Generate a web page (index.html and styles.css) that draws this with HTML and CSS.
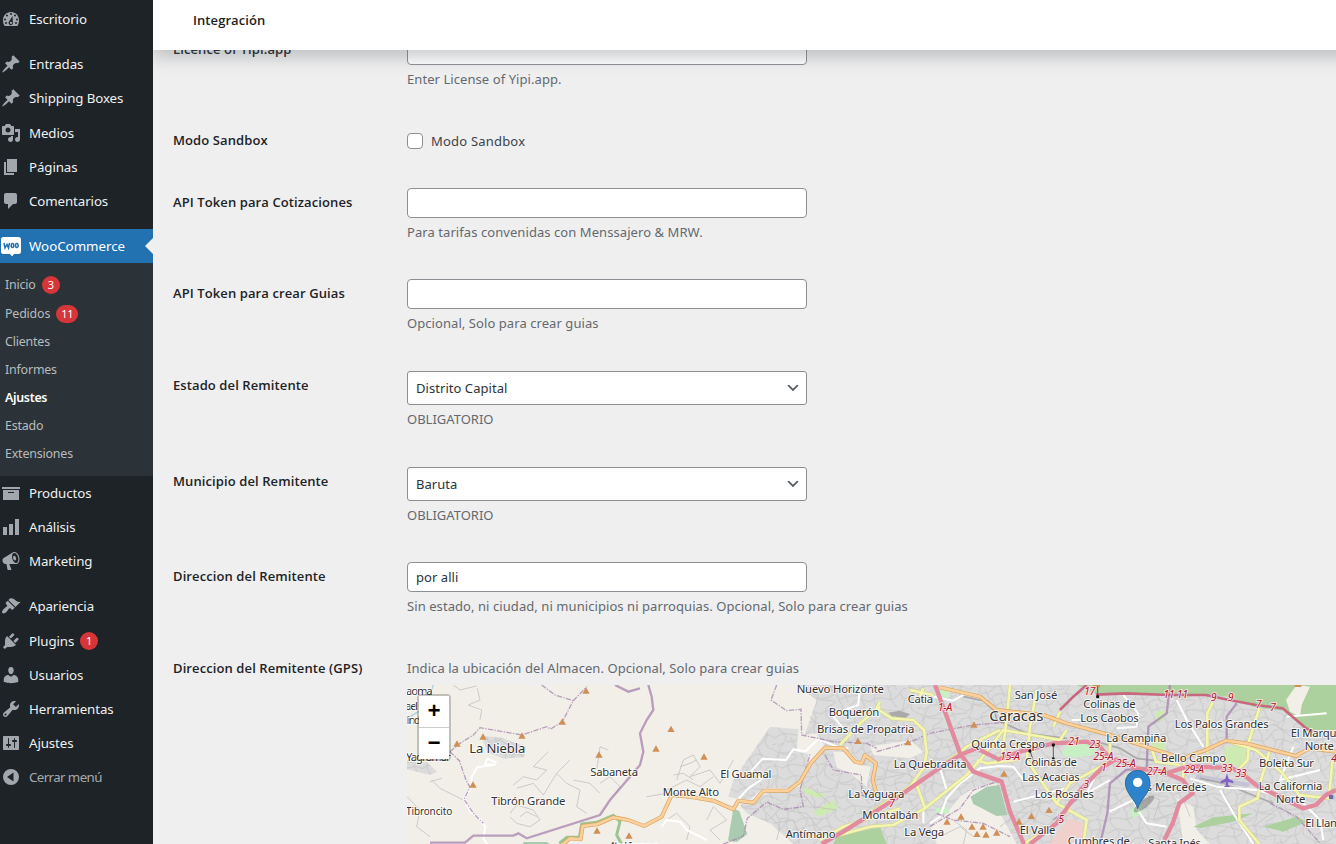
FILE: index.html
```html
<!DOCTYPE html>
<html lang="es">
<head>
<meta charset="utf-8">
<title>Ajustes de WooCommerce</title>
<link rel="stylesheet" href="styles.css">
</head>
<body>
<div class="layout">
  <nav class="sidebar">
    <a class="item"><svg class="icon" viewBox="0 0 20 20"><path fill-rule="evenodd" d="M3.76 17h12.48c1.34-1.63 1.76-3.73 1.76-6 0-4.42-3.58-8-8-8s-8 3.58-8 8c0 2.27.42 4.37 1.76 6zM9 5a1 1 0 1 0 2 0a1 1 0 1 0-2 0zM5 6.5a1 1 0 1 0 2 0a1 1 0 1 0-2 0zM13 6.500a1 1 0 1 0 2 0a1 1 0 1 0-2 0zM3 10.500a1 1 0 1 0 2 0a1 1 0 1 0-2 0zM15 10.500a1 1 0 1 0 2 0a1 1 0 1 0-2 0zM4 14a1 1 0 1 0 2 0a1 1 0 1 0-2 0zM14 14a1 1 0 1 0 2 0a1 1 0 1 0-2 0zM11.500 7L8.100 12.500a2.200 2.200 0 1 0 3.800 1zM10 12.800a1.100 1.100 0 1 1 0 2.200a1.100 1.100 0 1 1 0-2.200z"/></svg><span>Escritorio</span></a>
    <div class="separator"></div>
    <a class="item"><svg class="icon" viewBox="0 0 20 20"><path d="M10.44 3.02l1.82-1.82 6.36 6.35-1.83 1.82c-1.05-.68-2.48-.57-3.41.36l-.75.75c-.92.93-1.04 2.35-.35 3.41l-1.83 1.82-2.41-2.41-2.8 2.79c-.42.42-3.38 2.71-3.8 2.29s1.86-3.39 2.28-3.81l2.79-2.79L4.1 9.36l1.83-1.82c1.05.69 2.48.57 3.4-.36l.75-.75c.93-.92 1.05-2.35.36-3.41z"/></svg><span>Entradas</span></a>
    <a class="item"><svg class="icon" viewBox="0 0 20 20"><path d="M10.44 3.02l1.82-1.82 6.36 6.35-1.83 1.82c-1.05-.68-2.48-.57-3.41.36l-.75.75c-.92.93-1.04 2.35-.35 3.41l-1.83 1.82-2.41-2.41-2.8 2.79c-.42.42-3.38 2.71-3.8 2.29s1.86-3.39 2.28-3.81l2.79-2.79L4.1 9.36l1.83-1.82c1.05.69 2.48.57 3.4-.36l.75-.75c.93-.92 1.05-2.35.36-3.41z"/></svg><span>Shipping Boxes</span></a>
    <a class="item"><svg class="icon" viewBox="0 0 20 20"><path d="M13 11V4c0-.55-.45-1-1-1h-1.67L9 1H5L3.67 3H2c-.55 0-1 .45-1 1v7c0 .55.45 1 1 1h10c.55 0 1-.45 1-1zM7 4.5c1.38 0 2.5 1.12 2.5 2.5S8.380 9.500 7 9.500 4.500 8.380 4.500 7 5.620 4.500 7 4.500zM14 6h5v10.500c0 1.380-1.120 2.500-2.500 2.500S14 17.880 14 16.500s1.120-2.500 2.500-2.500c.17 0 .34.02.5.05V9h-3V6zm-4 8.050V13h2v3.500c0 1.380-1.120 2.500-2.500 2.500S7 17.880 7 16.500 8.120 14 9.500 14c.17 0 .34.02.5.05z"/></svg><span>Medios</span></a>
    <a class="item"><svg class="icon" viewBox="0 0 20 20"><path d="M6 15V2h10v13H6zm-1 1h8v2H3V5h2v11z"/></svg><span>Páginas</span></a>
    <a class="item"><svg class="icon" viewBox="0 0 20 20"><path d="M5 2h9c1.1 0 2 .9 2 2v7c0 1.1-.9 2-2 2h-2l-5 5v-5H5c-1.1 0-2-.9-2-2V4c0-1.1.9-2 2-2z"/></svg><span>Comentarios</span></a>
    <div class="separator"></div>
    <a class="item current"><svg class="icon woo" viewBox="0 0 20 20"><path fill="#fff" d="M2.500 1h15a2.500 2.500 0 0 1 2.500 2.500v12a2.500 2.500 0 0 1-2.500 2.500H13l-2 2.500L9 18H2.500A2.500 2.500 0 0 1 0 15.500v-12A2.500 2.500 0 0 1 2.500 1z"/><g fill="none" stroke="#2271b1" stroke-width="1.500"><path d="M3 7l1 5 2-3.500L7.500 12 8.500 7"/><ellipse cx="11.500" cy="9.500" rx="1.300" ry="2"/><ellipse cx="15.800" cy="9.500" rx="1.300" ry="2"/></g></svg><span>WooCommerce</span></a>
    <div class="submenu">
      <a class="sub tall">Inicio <b class="badge">3</b></a>
      <a class="sub tall">Pedidos <b class="badge">11</b></a>
      <a class="sub">Clientes</a>
      <a class="sub">Informes</a>
      <a class="sub active">Ajustes</a>
      <a class="sub">Estado</a>
      <a class="sub">Extensiones</a>
    </div>
    <a class="item"><svg class="icon" viewBox="0 0 20 20"><path d="M19 4v2H1V4h18zM2 7h16v10H2V7zm11 3V9H7v1h6z"/></svg><span>Productos</span></a>
    <a class="item"><svg class="icon" viewBox="0 0 20 20"><path d="M18 18V2h-4v16h4zm-6 0V7H8v11h4zm-6 0v-8H2v8h4z"/></svg><span>Análisis</span></a>
    <a class="item"><svg class="icon" viewBox="0 0 20 20"><path d="M18.15 5.94c.46 1.62.38 3.22-.02 4.48-.42 1.28-1.26 2.18-2.3 2.48-.16.06-.26.06-.4.06-.06.02-.12.02-.18.02-.06.02-.14.02-.22.02h-6.8l2.22 5.5c.02.14-.06.26-.14.34-.08.1-.24.16-.34.16H6.95c-.1 0-.26-.06-.34-.16-.08-.08-.16-.2-.14-.34l-1-5.5H4.25l-.02-.02c-.5.06-1.08-.18-1.54-.62s-.88-1.08-1.06-1.88c-.24-.8-.2-1.56-.02-2.2.18-.62.58-1.08 1.06-1.3l.02-.02 9-5.4c.1-.06.18-.1.24-.16.06-.04.14-.08.24-.12.16-.08.28-.12.5-.18 1.04-.3 2.24.1 3.22.98s1.84 2.24 2.26 3.86zm-2.58 5.98h-.02c.4-.1.74-.34 1.04-.7.58-.7.86-1.76.86-3.04 0-.64-.1-1.3-.28-1.98-.34-1.36-1.02-2.5-1.78-3.24s-1.68-1.1-2.46-.88c-.82.22-1.4.96-1.7 2-.32 1.04-.28 2.36.06 3.72.38 1.36 1 2.5 1.8 3.24.78.74 1.62 1.1 2.48.88zm-2.54-7.08c.22-.04.42-.02.62.04.38.16.76.48 1.02 1s.42 1.2.42 1.78c0 .3-.04.56-.12.8-.18.48-.44.84-.86.94-.34.1-.8-.06-1.14-.4s-.64-.86-.78-1.5c-.18-.62-.12-1.24.02-1.72s.48-.84.82-.94z"/></svg><span>Marketing</span></a>
    <div class="separator"></div>
    <a class="item"><svg class="icon" viewBox="0 0 20 20"><path d="M14.48 11.06L7.41 3.99l1.5-1.5c.5-.56 2.3-.47 3.51.32 1.21.8 1.43 1.28 2.91 2.1 1.18.64 2.45 1.26 4.45.85zm-.71.71L6.7 4.7 4.93 6.47c-.39.39-.39 1.02 0 1.41l1.06 1.06c.39.39.39 1.03 0 1.42-.6.6-1.43 1.11-2.21 1.69-.35.26-.7.53-1.01.84C1.43 14.23.4 16.08 1.4 17.07c.99 1 2.84-.03 4.18-1.36.31-.31.58-.66.85-1.02.57-.78 1.08-1.61 1.69-2.21.39-.39 1.02-.39 1.41 0l1.06 1.06c.39.39 1.02.39 1.41 0z"/></svg><span>Apariencia</span></a>
    <a class="item"><svg class="icon" viewBox="0 0 20 20"><path d="M13.11 4.36L9.87 7.6 8 5.73l3.24-3.24c.35-.34 1.05-.2 1.56.32.52.51.66 1.21.31 1.55zm-8 1.77l.91-1.12 9.01 9.01-1.19.84c-.71.71-2.63 1.16-3.82 1.16H6.14L4.9 17.26c-.59.59-1.54.59-2.12 0-.59-.58-.59-1.53 0-2.12l1.24-1.24v-3.88c0-1.13.4-3.19 1.09-3.89zm7.26 3.97l3.24-3.24c.34-.35 1.04-.21 1.55.31.52.51.66 1.21.31 1.55l-3.24 3.25z"/></svg><span>Plugins</span> <b class="badge">1</b></a>
    <a class="item"><svg class="icon" viewBox="0 0 20 20"><path d="M10 9.25c-2.27 0-2.73-3.44-2.73-3.44C7 4.02 7.82 2 9.97 2c2.16 0 2.98 2.02 2.71 3.81 0 0-.41 3.44-2.68 3.44zm0 2.57L12.72 10c2.39 0 4.52 2.33 4.52 4.53v2.49s-3.65 1.13-7.24 1.13c-3.65 0-7.24-1.13-7.24-1.13v-2.49c0-2.25 1.94-4.48 4.47-4.48z"/></svg><span>Usuarios</span></a>
    <a class="item"><svg class="icon" viewBox="0 0 20 20"><path d="M16.68 9.77c-1.34 1.34-3.3 1.67-4.95.99l-5.41 6.52c-.99.99-2.59.99-3.58 0s-.99-2.59 0-3.57l6.52-5.42c-.68-1.65-.35-3.61.99-4.95 1.28-1.28 3.12-1.62 4.72-1.06l-2.89 2.89 2.82 2.82 2.86-2.87c.53 1.58.18 3.39-1.08 4.65zM3.81 16.21c.4.39 1.04.39 1.43 0 .4-.4.4-1.04 0-1.43-.39-.4-1.03-.4-1.43 0-.39.39-.39 1.03 0 1.43z"/></svg><span>Herramientas</span></a>
    <a class="item"><svg class="icon" viewBox="0 0 20 20"><path d="M18 16V4c0-.55-.45-1-1-1H3c-.55 0-1 .45-1 1v12c0 .55.45 1 1 1h14c.55 0 1-.45 1-1zM8 11h1c.55 0 1 .45 1 1s-.45 1-1 1H8v1.5c0 .28-.22.5-.5.5s-.5-.22-.5-.5V13H6c-.55 0-1-.45-1-1s.45-1 1-1h1V5.5c0-.28.22-.5.5-.5s.5.22.5.5V11zm5-2h-1c-.55 0-1-.45-1-1s.45-1 1-1h1V5.5c0-.28.22-.5.5-.5s.5.22.5.5V7h1c.55 0 1 .45 1 1s-.45 1-1 1h-1v5.5c0 .28-.22.5-.5.5s-.5-.22-.5-.5V9z"/></svg><span>Ajustes</span></a>
    <a class="item collapse"><svg class="icon" viewBox="0 0 20 20"><path fill-rule="evenodd" d="M10 2a8 8 0 1 1 0 16a8 8 0 1 1 0-16zM12.500 5.500L6 10l6.500 4.500z"/></svg><span>Cerrar menú</span></a>
  </nav>

  <main class="main">
    <header class="topbar"><h1>Integración</h1></header>
    <form class="form">
      <div class="row r91"><label class="name">Licence of Yipi.app</label><div class="field"><input class="text" type="text"><p class="help">Enter License of Yipi.app.</p></div></div>
      <div class="row r62"><label class="name">Modo Sandbox</label><div class="field"><label class="check"><input class="box" type="checkbox"><span>Modo Sandbox</span></label></div></div>
      <div class="row r91"><label class="name">API Token para Cotizaciones</label><div class="field"><input class="text" type="text"><p class="help">Para tarifas convenidas con Menssajero &amp; MRW.</p></div></div>
      <div class="row r92"><label class="name">API Token para crear Guias</label><div class="field"><input class="text" type="text"><p class="help">Opcional, Solo para crear guias</p></div></div>
      <div class="row r96"><label class="name">Estado del Remitente</label><div class="field"><div class="select"><span>Distrito Capital</span><svg class="chevron" viewBox="0 0 20 20"><path d="M5 6l5 5 5-5 2 1-7 7-7-7 2-1z"/></svg></div><p class="help caps">OBLIGATORIO</p></div></div>
      <div class="row r95"><label class="name">Municipio del Remitente</label><div class="field"><div class="select"><span>Baruta</span><svg class="chevron" viewBox="0 0 20 20"><path d="M5 6l5 5 5-5 2 1-7 7-7-7 2-1z"/></svg></div><p class="help caps">OBLIGATORIO</p></div></div>
      <div class="row r92"><label class="name">Direccion del Remitente</label><div class="field"><input class="text" type="text" value="por alli"><p class="help">Sin estado, ni ciudad, ni municipios ni parroquias. Opcional, Solo para crear guias</p></div></div>
      <div class="row"><label class="name">Direccion del Remitente (GPS)</label><div class="field"><p class="help lead">Indica la ubicación del Almacen. Opcional, Solo para crear guias</p>
        <div class="map">
          <svg class="canvas" viewBox="21 15 2787 477" preserveAspectRatio="none">
            <defs>
              <pattern id="streets" width="150" height="130" patternUnits="userSpaceOnUse" patternTransform="rotate(-14)">
                <rect width="150" height="130" fill="#dcdcdc"/>
                <path d="M0 14Q30 4 52 18T96 10 150 14M0 52Q20 38 44 50T88 62 118 44 150 52M0 96Q34 110 60 92T110 100 150 96M20 0Q8 24 26 40T14 78 30 110 20 130M70 0L64 22 76 50M96 10L104 36 92 60 98 98M128 0Q140 20 124 44T136 84 128 130M52 92L46 60M60 92L66 130M30 70L56 74 80 62M0 76L18 72M104 30L128 32M136 70L150 68M84 98L88 130M66 116L88 112 128 118" fill="none" stroke="#c6c6c6" stroke-width="2.600"/>
              </pattern>
              <path id="peak" d="M0-10L11 9H-11Z"/>
            </defs>
            <rect x="0" y="0" width="2830" height="500" fill="#f2efe9"/>
            <g fill="url(#streets)">
              <path d="M245 168L300 172 378 200 372 232 310 236 262 215ZM21 240L80 246 112 275 90 285 21 268Z"/>
              <path d="M985 350L1000 300 1055 220 1110 140 1195 148 1190 215 1225 222 1215 290 1170 325 1090 325 1045 362Z"/>
              <path d="M1190 15H2808V492H1265L1180 492 1110 430 1040 400 1020 375 1100 340 1200 320 1225 260 1275 200 1250 160 1215 165 1250 60Z"/>
            </g>
            <g fill="#f2efe9">
              <path d="M1300 215L1350 215 1385 255 1412 260 1400 320 1350 280 1310 262Z"/>
              <path d="M1640 400L1680 350 1720 325 1790 310 1800 400 1850 492H1610L1590 440Z"/>
              <path d="M1410 200L1530 180 1570 215 1530 235 1420 225Z"/>
              <path d="M2330 355L2380 380 2390 450 2430 492H2350L2340 420Z"/>
            </g>
            <g fill="#add19e">
              <path d="M2030 15H2808V150H2720L2650 92 2560 80 2490 50 2200 38 2090 42Z"/>
              <path d="M1310 470L1440 440 1460 492H1300Z"/>
              <path d="M2380 440L2440 412 2560 400 2500 425 2400 445Z"/>
              <path d="M2590 440L2690 410 2720 425 2650 455Z"/>
            </g>
            <g fill="#aacbaf">
              <path d="M1000 385L1018 394 1042 462 1010 486 984 482Z"/>
              <path d="M1712 350L1760 320 1798 315 1822 405 1790 408 1720 372Z"/>
              <path d="M370 486L440 486 450 492H370Z"/>
            </g>
            <g fill="#c9f0c5">
              <path d="M1205 320L1280 345 1260 355 1215 340ZM1240 395L1300 360 1315 385 1255 410Z" fill="#cdebb0"/>
              <path d="M1985 215L2020 170 2080 190 2090 225 2030 232 1990 228Z"/>
              <path d="M2475 200L2540 198 2530 262 2470 255ZM2268 95L2295 90 2290 120 2270 125ZM2250 165L2290 180 2300 220 2260 210Z" fill="#cdebb0"/>
              <path d="M1620 22L1650 35 1645 55 1620 50ZM1605 385L1640 380 1650 400 1610 400ZM2190 390L2220 370 2230 400 2200 415Z"/>
            </g>
            <path d="M2658 60L2690 15 2730 20 2705 75 2700 110 2670 95Z" fill="#f2efe9"/>
            <path d="M1975 450L2010 415 2050 430 2060 492H1950Z" fill="#f0d0cc"/>
            <path d="M2390 283L2550 308 2545 322 2385 296Z" fill="#c4c4d4"/>
            <path d="M1465 98L1500 92 1530 103 1515 115 1475 108Z" fill="#aaa"/>

            <g class="trail">
              <path d="M160 15L180 30 230 18M232 25L240 60 205 75 245 90 240 120M260 200L300 180 340 205 365 225M95 300L120 325 190 360M90 305L125 295M21 350L60 390 50 440 90 470M340 315L370 290 410 300 440 270 400 260 445 215M350 325L400 310 430 345 470 280 510 240M470 280L500 310 540 330 530 380 560 400M330 400L350 375 400 390 420 420 390 440 350 430 330 410M360 410L380 395 410 410M600 310L630 290 660 320 640 350M590 270L600 200 625 210M520 300L570 310 600 340"/>
              <path d="M830 300L850 240 880 225 900 260 870 290 930 270 960 310 1000 240M800 330L860 300 900 320 940 290M740 350L800 340M920 420L940 380 980 420 930 450 960 480M800 420L830 400 870 440 860 480M1120 430L1180 420 1200 470M1100 400L1140 440 1130 480M1200 30L1250 45M1230 110L1260 140M840 260L870 250 890 240M820 285L850 280 880 300"/>
              <path d="M1200 330L1240 380 1310 390M1230 320L1290 370M1150 390L1220 400 1260 450M1660 420L1700 450 1690 492M1620 470L1680 440 1720 470M2300 380L2350 360 2370 410M2440 350L2520 400M2560 440L2640 380 2720 440M2480 440L2600 470"/>
              <path d="M2200 330L2280 360 2260 420 2320 400M2620 130L2700 190M1800 440L1880 380 1960 360M1850 350L1920 380 1900 430M1430 300L1520 280 1580 320M1450 150L1540 140"/>
            </g>
            <path d="M1690 50L1750 62 1785 95 1790 120 1880 160 2000 175M2090 185L2160 205 2210 235 2290 245M2400 295L2470 310 2620 370" fill="none" stroke="#a9a9a9" stroke-width="5"/>

            <g class="white-road">
              <path d="M290 248L262 236 255 252 285 254 232 262 214 292 214 322 192 358 212 396 238 416 256 440 250 476 262 492"/>
              <path d="M1012 360L1045 325 1085 298 1055 272 1088 236 1158 240 1180 208 1216 214 1255 178 1312 200 1345 205M785 440L800 420 840 425 860 450 920 480M1380 15L1375 75 1345 85 1300 110 1350 170"/>
              <path d="M1590 430L1620 410 1640 355 1680 310 1740 265 1800 258 1840 260 1870 300M1622 270L1640 330M1840 365L2000 325M1570 390L1570 430M1600 50L1660 62 1690 45M2015 120H2045"/>
              <path d="M2330 60L2360 120 2410 200M2170 45L2215 100 2210 140 2150 145M2128 395L2200 360 2220 400 2240 430 2300 440M2370 295L2450 320 2570 330 2680 360M2460 330L2500 400 2560 492M2680 200L2640 300 2760 270M2690 350L2760 420 2770 480M2780 100L2660 110M2100 260L2060 340 2130 300"/>
            </g>

            <g class="boundary solid">
              <path d="M90 488H195L220 467H340L355 460 380 475 600 405 630 360 690 290 720 255 730 215 720 160 740 120 760 90 755 50 745 15"/>
              <path d="M645 15L685 35 720 25"/>
              <path d="M2310 15L2300 100 2245 140 2240 265 2178 270 2130 310 2122 400 2100 492"/>
              <path d="M2510 70L2480 110 2480 190"/>
            </g>
            <g class="boundary dashed">
              <path d="M150 215L180 190 220 165 240 143 366 165 440 140 452 147 487 125 520 62 560 20M425 15L465 45 520 62M150 215L178 242 198 300 210 322 192 358 220 400 250 430"/>
              <path d="M1130 15L1113 60 1160 92 1203 88 1205 165 1300 185 1400 190 1430 205M1275 225L1300 270 1384 285 1386 345 1420 360M970 492L1030 468 1042 415 1100 366 1150 388 1210 380 1200 330 1230 222"/>
              <path d="M1430 215L1520 190 1590 160 1720 135 1840 125M1590 440L1680 385 1720 330 1790 305M1610 400L1660 420 1750 430 1830 470M1960 420L2050 340M2610 370L2690 410 2760 490"/>
            </g>

            <g class="yellow">
              <path d="M1440 65L1430 85 1475 115 1540 120 1572 150 1580 215 1572 262 1530 320 1410 400M1320 195L1380 130 1440 80M1530 30L1600 45M1570 25L1555 60"/>
              <path d="M1300 470L1410 440 1480 435 1575 385 1700 285 1740 240 1810 150 1980 180 2000 150M1545 300L1575 385M1620 265L1700 200 1800 150M1830 15L1822 100 1806 230M1910 30L1890 140 1880 240 1970 370 2010 310 2130 245M1980 95L1960 140M1970 370L2060 420 2050 492M1260 480L1330 440 1500 385M1730 240L1760 250 1850 240"/>
              <path d="M2438 68L2422 100V220M2578 85L2548 180 2543 240 2518 265M2488 185L2568 210 2648 280 2698 345 2790 355M2608 215L2583 300 2573 355 2518 380 2518 420 2578 492M2253 200L2268 245 2340 255M2353 240L2348 300M2798 235L2788 340M2130 190L2130 240M1870 492L1960 440 2010 380"/>
            </g>
            <g class="yellow-core">
              <path d="M1440 65L1430 85 1475 115 1540 120 1572 150 1580 215 1572 262 1530 320 1410 400M1320 195L1380 130 1440 80M1530 30L1600 45M1570 25L1555 60"/>
              <path d="M1300 470L1410 440 1480 435 1575 385 1700 285 1740 240 1810 150 1980 180 2000 150M1545 300L1575 385M1620 265L1700 200 1800 150M1830 15L1822 100 1806 230M1910 30L1890 140 1880 240 1970 370 2010 310 2130 245M1980 95L1960 140M1970 370L2060 420 2050 492M1260 480L1330 440 1500 385M1730 240L1760 250 1850 240"/>
              <path d="M2438 68L2422 100V220M2578 85L2548 180 2543 240 2518 265M2488 185L2568 210 2648 280 2698 345 2790 355M2608 215L2583 300 2573 355 2518 380 2518 420 2578 492M2253 200L2268 245 2340 255M2353 240L2348 300M2798 235L2788 340M2130 190L2130 240M1870 492L1960 440 2010 380"/>
            </g>

            <path class="green-line" d="M478 490L500 472 538 472 545 432 590 427 640 406 660 425 650 465 665 492"/>
            <path class="orange" d="M490 492L510 475 542 478 548 438 592 433 640 412 685 420 732 438 785 410 815 345 880 352 940 362 1000 388 1015 362 1060 368 1090 332 1165 332 1200 305 1232 250 1275 203 1330 205 1365 245 1385 250 1395 225 1428 250 1418 300 1432 350M1620 22L1740 50 1790 90 1930 105 2000 130 2130 165 2253 205 2348 235 2418 210 2478 182 2538 190 2688 228 2728 205 2808 215"/>
            <path class="orange-core" d="M490 492L510 475 542 478 548 438 592 433 640 412 685 420 732 438 785 410 815 345 880 352 940 362 1000 388 1015 362 1060 368 1090 332 1165 332 1200 305 1232 250 1275 203 1330 205 1365 245 1385 250 1395 225 1428 250 1418 300 1432 350M1620 22L1740 50 1790 90 1930 105 2000 130 2130 165 2253 205 2348 235 2418 210 2478 182 2538 190 2688 228 2728 205 2808 215"/>

            <path class="red" d="M1605 15L1635 95 1680 220 1720 275 1805 305 1830 395 1872 492M1265 492L1330 455 1480 360 1610 270 1680 225 1730 205 1790 235M1790 240L1860 215 1960 190 2060 185 2100 200 2128 235M1890 492L1970 430 2010 370 2050 320 2110 260 2148 238 2208 265 2288 275 2348 300 2378 340 2338 370 2318 430 2293 480M2298 280L2368 258 2498 265 2538 290 2568 315 2628 345 2708 385 2748 375 2778 345 2808 330"/>
            <path class="red thin" d="M2060 15L2020 50 1980 90M2088 44L2178 40 2308 45 2418 45 2488 60 2568 75 2648 85 2718 145 2740 155"/>

            <g class="peaks">
              <use href="#peak" x="558" y="32"/><use href="#peak" x="487" y="125"/><use href="#peak" x="366" y="167"/><use href="#peak" x="249" y="170"/><use href="#peak" x="171" y="191"/><use href="#peak" x="597" y="224"/><use href="#peak" x="219" y="314"/><use href="#peak" x="591" y="452"/><use href="#peak" x="687" y="467"/>
              <use href="#peak" x="813" y="147"/><use href="#peak" x="768" y="206"/><use href="#peak" x="912" y="230"/><use href="#peak" x="1374" y="183"/>
              <use href="#peak" x="1722" y="134"/><use href="#peak" x="1524" y="187"/><use href="#peak" x="1812" y="281"/><use href="#peak" x="1947" y="390"/><use href="#peak" x="1894" y="408"/><use href="#peak" x="1857" y="425"/><use href="#peak" x="1683" y="410"/><use href="#peak" x="1641" y="425"/><use href="#peak" x="1716" y="440"/><use href="#peak" x="1749" y="440"/><use href="#peak" x="1731" y="462"/><use href="#peak" x="1758" y="464"/><use href="#peak" x="1790" y="458"/>
              <path d="M2080 15H2100V22H2080ZM2684 15H2704V21H2684Z"/>
            </g>
            <path d="M1890 213L1903 250M1960 195V235M2093 50V20" stroke="#222" stroke-width="2"/>
            <g fill="#111"><circle cx="1890" cy="213" r="5"/><circle cx="1960" cy="195" r="5"/><circle cx="1960" cy="236" r="4"/><circle cx="2093" cy="50" r="5"/></g>
            <path d="M2481 280L2486 296 2500 304V310L2485 306 2484 315 2490 321H2472L2478 315 2477 306 2462 310V304L2476 296Z" fill="#8461c4"/>
            <rect x="2787" y="345" width="13" height="12" fill="#6b6bb5"/>
            <path d="M100 15L90 45M55 95L30 110 21 130" stroke="#a5d3df" stroke-width="4" fill="none"/>

            <g class="place">
              <text x="18" y="46" textLength="80">aoma</text><text x="16" y="90" textLength="38">ael</text><text x="18" y="131" textLength="44">lind</text>
              <text x="18" y="242" textLength="134">Yagrumar</text>
              <text class="town" x="208" y="218" textLength="168">La Niebla</text>
              <text x="571" y="287" textLength="143">Sabaneta</text><text x="274" y="375" textLength="222">Tibrón Grande</text><text class="small" x="18" y="405" textLength="139">Tibroncito</text>
              <text x="628" y="510" textLength="150">Alto de Izcaragua</text>
              <text x="788" y="347" textLength="169">Monte Alto</text><text x="961" y="293" textLength="153">El Guamal</text>
              <text x="1190" y="38" textLength="262">Nuevo Horizonte</text><text x="1286" y="107" textLength="152">Boquerón</text><text x="1251" y="159" textLength="292">Brisas de Propatria</text>
              <text x="1345" y="354" textLength="168">La Yaguara</text><text x="1387" y="417" textLength="168">Montalbán</text><text x="1157" y="473" textLength="150">Antímano</text>
              <text x="1523" y="68" textLength="76">Catia</text><text x="1844" y="58" textLength="128">San José</text><text class="city" x="1768" y="124" textLength="162">Caracas</text>
              <text x="1714" y="204" textLength="221">Quinta Crespo</text><text x="1481" y="265" textLength="219">La Quebradita</text>
              <text x="1874" y="259" textLength="157">Colinas de</text><text x="1867" y="302" textLength="172">Las Acacias</text><text x="1904" y="353" textLength="178">Los Rosales</text>
              <text x="1859" y="461" textLength="107">El Valle</text><text x="1513" y="467" textLength="119">La Vega</text><text x="2003" y="496" textLength="187">Cumbres de</text>
              <text x="2050" y="83" textLength="157">Colinas de</text><text x="2041" y="126" textLength="175">Los Caobos</text>
              <text x="2119" y="185" textLength="180">La Campiña</text><text x="2324" y="145" textLength="282">Los Palos Grandes</text><text x="2283" y="247" textLength="195">Bello Campo</text>
              <text x="2577" y="262" textLength="165">Boleíta Sur</text><text x="2672" y="170" textLength="172">El Marqués</text><text x="2714" y="211" textLength="88">Norte</text>
              <text x="2576" y="329" textLength="191">La California</text><text x="2628" y="370" textLength="88">Norte</text><text x="2203" y="333" textLength="217">Las Mercedes</text>
              <text x="2716" y="440" textLength="132">El Llanito</text><text x="2245" y="500" textLength="158">Santa Inés</text>
            </g>
            <g class="ref">
              <text x="1613" y="93">1-A</text><text x="2052" y="45">17</text><text x="2005" y="195">21</text><text x="2068" y="205">23</text><text x="1800" y="241">15-A</text><text x="2080" y="240">25-A</text><text x="2147" y="260">25-A</text><text x="2103" y="273">1</text><text x="2050" y="324">3</text><text x="1975" y="428">5</text><text x="1467" y="380">7</text>
              <text x="2290" y="54">11</text><text x="2330" y="54">11</text><text x="2432" y="62">9</text><text x="2483" y="64">9</text><text x="2567" y="84">7</text><text x="2610" y="92">7</text><text x="2240" y="284">27-A</text><text x="2352" y="278">29-A</text><text x="2464" y="277">33</text><text x="2506" y="290">33</text><text x="2794" y="247">4</text>
            </g>
            <ellipse cx="2232" cy="372" rx="38" ry="12" transform="rotate(-38 2232 372)" fill="#333" opacity=".3"/>
            <path d="M2213 386C2207 360 2176 340 2176 308A37 37 0 0 1 2250 308C2250 340 2219 360 2213 386Z" fill="#2e83ca" stroke="#2e6c97" stroke-width="3"/>
            <circle cx="2213" cy="307" r="14" fill="#fff"/>
          </svg>
          <div class="zoom"><span class="zoom-in">+</span><span class="zoom-out">−</span></div>
        </div>
      </div></div>
    </form>
  </main>
</div>
</body>
</html>
```
FILE: styles.css
```css
* { box-sizing: border-box; }
body { margin: 0; background: #f0f0f1; font: 13px/20px "Noto Sans", "Open Sans", sans-serif; color: #3c434a; }
.layout { display: flex; width: 1336px; height: 844px; overflow: hidden; }

.sidebar { flex: none; width: 153px; padding-top: 2px; background: #1d2327; }
.item { display: flex; align-items: center; height: 34.2px; padding-left: 1px; color: #f0f0f1; font-size: 13.3px; letter-spacing: -.1px; }
.icon { width: 20px; height: 20px; margin-right: 8px; fill: #a2a7ad; flex: none; }
.separator { height: 11px; }
.current { position: relative; background: #2271b1; color: #fff; letter-spacing: 0; }
.current::after { content: ""; position: absolute; right: 0; top: 9px; border: 8px solid transparent; border-left: 0; border-right-color: #f0f0f1; }
.woo { margin-top: -1px; }
.submenu { height: 212.4px; padding: 7px 0 8px 5px; background: #2c3338; }
.sub { display: flex; align-items: center; height: 28px; color: #b7bbbd; font-size: 12.4px; letter-spacing: -.17px; }
.tall { height: 29px; }
.active { color: #fff; font-weight: 600; letter-spacing: -.3px; }
.badge { display: inline-flex; align-items: center; justify-content: center; min-width: 18px; height: 18px; margin-left: 6px; padding: 0 5px; border-radius: 9px; background: #d63638; color: #fff; font-size: 11px; font-weight: 400; }
.collapse { color: #a7aaad; letter-spacing: -.6px; }

.main { flex: 1; min-width: 0; overflow: hidden; background: #efefef; }
.topbar { position: relative; z-index: 1; height: 50px; margin-right: -30px; padding: 10px 40px; background: #fff; box-shadow: 0 8px 16px 0 rgba(85, 93, 102, .3); }
.topbar h1 { margin: 0; font: 600 13px/20px "Open Sans", sans-serif; letter-spacing: .07px; color: #1e1e1e; }
.form { margin-top: -15px; padding-left: 20px; }
.row { display: flex; }
.r62 { height: 62px; }
.r91 { height: 91px; }
.r92 { height: 92px; }
.r95 { height: 95px; }
.r96 { height: 96px; }
.name { flex: none; width: 234px; font: 600 13px/28px "Open Sans", sans-serif; letter-spacing: .1px; color: #1d2327; }
.field { flex: 1; min-width: 0; }
.text, .select { display: block; width: 400px; height: 30px; padding: 0 8px; border: 1px solid #8c8f94; border-radius: 4px; background: #fff; color: #2c3338; font: 13px/28px "Noto Sans", sans-serif; letter-spacing: .05px; }
.select { display: flex; align-items: center; justify-content: space-between; height: 34px; padding-right: 5px; border-radius: 3px; }
.chevron { width: 16px; height: 16px; fill: #50575e; }
.help { margin: 4px 0 0; letter-spacing: .07px; color: #646970; }
.caps { letter-spacing: 0; }
.lead { margin: 0 0 3px; line-height: 28px; }
.check { display: flex; align-items: center; height: 30px; gap: 8px; letter-spacing: .2px; }
.box { appearance: none; width: 16px; height: 16px; margin: 0; border: 1px solid #8c8f94; border-radius: 4px; background: #fff; }

.map { position: relative; width: 929px; height: 159px; overflow: hidden; }
.canvas { display: block; width: 929px; height: 159px; }
.zoom { position: absolute; left: 10px; top: 9px; width: 34px; border: 2px solid rgba(0, 0, 0, .2); border-radius: 4px; background-clip: padding-box; }
.zoom span { display: block; height: 31px; background: #fff; color: #000; font: bold 22px/33px "Liberation Mono", monospace; text-align: center; }
.zoom .zoom-in { height: 32px; border-bottom: 1px solid #ccc; }

.trail { fill: none; stroke: #c4c3bf; stroke-width: 2.500; }
.white-road { fill: none; stroke: #fff; stroke-width: 6; stroke-linejoin: round; }
.boundary { fill: none; stroke: #a583ad; opacity: .75; }
.solid { stroke-width: 7; }
.dashed { stroke-width: 4; stroke-dasharray: 16 4 4 4; }
.yellow, .yellow-core, .orange, .orange-core, .red, .green-line { fill: none; stroke-linejoin: round; }
.yellow { stroke: #cfd08a; stroke-width: 11; }
.yellow-core { stroke: #f3f5b0; stroke-width: 8; }
.orange { stroke: #d9a35e; stroke-width: 12; }
.orange-core { stroke: #fbd09a; stroke-width: 8; }
.green-line { stroke: #9cc58f; stroke-width: 9; }
.red { stroke: #e28a9e; stroke-width: 13; }
.thin { stroke: #c8687f; stroke-width: 8; }
.peaks { fill: #d08f55; }
.place { font: 34px "Noto Sans", sans-serif; fill: #333; stroke: rgba(255, 255, 255, .75); stroke-width: 6; stroke-linejoin: round; paint-order: stroke; }
.small { font-size: 30px; }
.town { font-size: 39px; }
.city { font-size: 45px; }
.ref { font: italic 32px "Noto Sans", sans-serif; letter-spacing: -1px; fill: #a81a30; stroke: #fbe3e6; stroke-width: 5; paint-order: stroke; }
```
